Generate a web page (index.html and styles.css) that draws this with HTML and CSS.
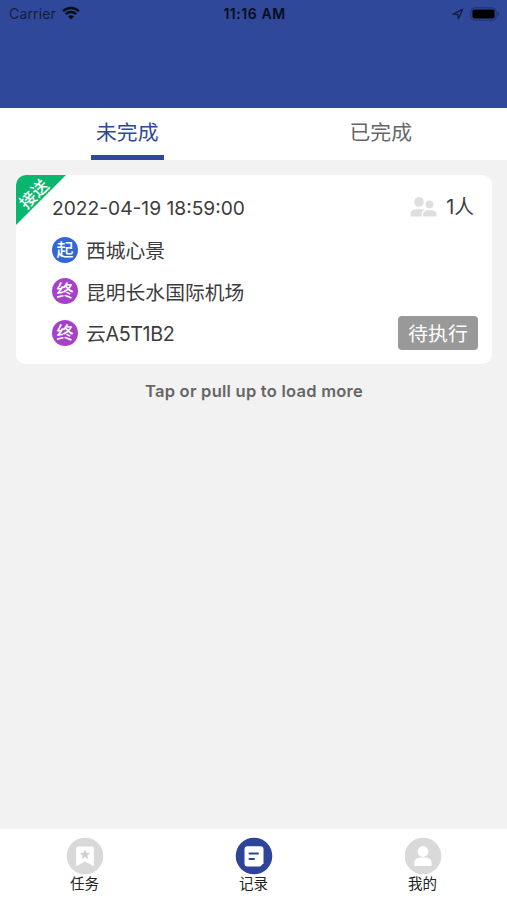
FILE: index.html
```html
<!DOCTYPE html>
<html lang="zh-CN">
<head>
    <meta charset="UTF-8">
    <meta name="viewport" content="width=device-width, initial-scale=1.0">
    <title>记录</title>
    <link rel="stylesheet" href="styles.css">
</head>
<body>
    <div class="app">
        <header class="header">
            <div class="status-bar">
                <div class="status-left">
                    <span class="carrier">Carrier</span>
                    <svg class="wifi" width="18" height="14" viewBox="0 0 18 14">
                        <path d="M1 5.2a11.5 11.5 0 0 1 16 0M3.8 8.2a7.4 7.4 0 0 1 10.4 0" fill="none" stroke="#080d1c" stroke-width="2.4"/>
                        <path d="M6 10.6a4.3 4.3 0 0 1 6 0L9 13.6z" fill="#080d1c"/>
                    </svg>
                </div>
                <div class="time">11:16 AM</div>
                <div class="status-right">
                    <svg width="12" height="12" viewBox="0 0 12 12">
                        <path d="M1 6.2 10.6 1.4 6.3 10.8 5.8 6.5z" fill="none" stroke="#141d40" stroke-width="1.3" stroke-linejoin="round"/>
                    </svg>
                    <svg width="30" height="14" viewBox="0 0 30 14">
                        <rect x=".8" y=".8" width="25.4" height="12.4" rx="3.8" fill="none" stroke="#21316a" stroke-width="1"/>
                        <rect x="2.4" y="2.4" width="22.2" height="9.2" rx="2" fill="#000"/>
                        <path d="M27.6 4.8v4.4q1.6-.7 1.6-2.2t-1.6-2.2z" fill="#21316a"/>
                    </svg>
                </div>
            </div>
        </header>

        <nav class="tabs">
            <div class="tab active">未完成</div>
            <div class="tab">已完成</div>
        </nav>

        <main class="content">
            <div class="card">
                <div class="ribbon"><span>接送</span></div>
                <div class="row">
                    <span class="date">2022-04-19 18:59:00</span>
                    <div class="people">
                        <svg width="27" height="20" viewBox="0 0 27 20" fill="#dedede">
                            <circle cx="9" cy="5" r="4.8"/>
                            <circle cx="19.5" cy="7.4" r="3.9"/>
                            <path d="M.5 19.5v-2.3q0-5 6-5H12q1.200 0 2.200.4-2.700 1.800-2.700 5v1.900z"/>
                            <path d="M13 19.500v-1.800q0-4.500 5-4.500h3.500q5 0 5 4.500v1.800z"/>
                        </svg>
                        <span>1人</span>
                    </div>
                </div>
                <div class="row">
                    <span class="dot start">起</span>
                    <span class="place">西城心景</span>
                </div>
                <div class="row">
                    <span class="dot end">终</span>
                    <span class="place">昆明长水国际机场</span>
                </div>
                <div class="row">
                    <span class="dot end">终</span>
                    <span class="place code">云A5T1B2</span>
                    <button class="state">待执行</button>
                </div>
            </div>
            <div class="load-more">Tap or pull up to load more</div>
        </main>

        <footer class="tabbar">
            <div class="item">
                <svg width="38" height="38" viewBox="0 0 38 38">
                    <circle cx="19" cy="19" r="18.3" fill="#d9d9d9"/>
                    <path d="M11.8 9.500h14.400q1.600 0 1.600 1.600v18.200L19 24.600l-8.800 4.700V11.100q0-1.600 1.600-1.600z" fill="#fff"/>
                    <path d="M19 12.200l1.400 3.600 3.900.2-3 2.400 1 3.800-3.300-2.100-3.300 2.100 1-3.800-3-2.400 3.900-.2z" fill="#d0d0d0"/>
                </svg>
                <span>任务</span>
            </div>
            <div class="item">
                <svg width="38" height="38" viewBox="0 0 38 38">
                    <circle cx="19" cy="19" r="18.3" fill="#2d4499"/>
                    <path d="M12.500 9.300h13q3 0 3 3v14l-3.200 3.200H12.500q-3 0-3-3V12.300q0-3 3-3z" fill="#fff"/>
                    <path d="M14.500 16.500h8.500M14.500 22h4.500" stroke="#2d4499" stroke-width="2" stroke-linecap="round"/>
                </svg>
                <span>记录</span>
            </div>
            <div class="item">
                <svg width="38" height="38" viewBox="0 0 38 38">
                    <circle cx="19" cy="19" r="18.3" fill="#d9d9d9"/>
                    <circle cx="19" cy="14.500" r="5.400" fill="#fff"/>
                    <path d="M10.300 29v-2.500q0-6 6-6h5.400q6 0 6 6V29z" fill="#fff"/>
                </svg>
                <span>我的</span>
            </div>
        </footer>
    </div>
</body>
</html>
```
FILE: styles.css
```css
* {
    box-sizing: border-box;
}
body {
    margin: 0;
    font-family: Inter, "Noto Sans CJK SC", sans-serif;
    background: #f2f2f2;
    color: #3c3c3c;
}
.app {
    display: flex;
    flex-direction: column;
    height: 900px;
}
.header {
    height: 108px;
    background: #304899;
}
.status-bar {
    display: grid;
    grid-template-columns: 1fr auto 1fr;
    align-items: center;
    height: 27px;
    padding: 0 7px 0 9px;
    color: #080d1c;
    font-size: 14px;
}
.status-left, .status-right {
    display: flex;
    align-items: center;
    gap: 6px;
}
.carrier {
    color: #141d40;
    letter-spacing: 0.15px;
}
.wifi {
    margin-top: -2px;
}
.status-right {
    justify-content: flex-end;
}
.time {
    font-weight: 600;
    letter-spacing: 0.55px;
}
.tabs {
    display: flex;
    height: 52px;
    background: #fff;
}
.tab {
    flex: 1;
    display: flex;
    flex-direction: column;
    align-items: center;
    justify-content: space-between;
    padding-left: 1px;
    line-height: 47px;
    padding-top: 1px;
    font-size: 20.8px;
    color: #666;
}
.tab.active {
    color: #304899;
}
.tab.active::after {
    content: "";
    width: 73px;
    height: 5px;
    margin-top: -1px;
    background: #304899;
}
.content {
    flex: 1;
    padding: 15px 15px 0 16px;
}
.card {
    position: relative;
    height: 189px;
    padding: 12px 14px 0 36px;
    background: #fff;
    border-radius: 10px;
    overflow: hidden;
}
.ribbon {
    position: absolute;
    top: 0;
    left: 0;
    width: 50px;
    height: 50px;
    background: #09b66d;
    clip-path: polygon(0 0, 100% 0, 0 100%);
}
.ribbon span {
    position: absolute;
    top: 8px;
    left: -7px;
    width: 50px;
    line-height: 22px;
    text-align: center;
    font-size: 16.5px;
    font-weight: 500;
    color: #fff;
    transform: rotate(-45deg);
}
.row {
    display: flex;
    align-items: center;
    height: 41.7px;
    font-size: 19.8px;
}
.date {
    font-size: 19.2px;
}
.people {
    display: flex;
    align-items: center;
    gap: 9px;
    margin-left: auto;
    margin-right: 4px;
    line-height: 26px;
    padding-bottom: 2px;
}
.code {
    letter-spacing: -0.4px;
}
.dot {
    width: 26px;
    height: 26px;
    margin-right: 8px;
    border-radius: 50%;
    line-height: 26px;
    text-align: center;
    font-size: 17px;
    font-weight: 500;
    color: #fff;
}
.start {
    background: #3268d6;
}
.end {
    background: #a642ca;
}
.state {
    width: 80px;
    height: 34px;
    margin-left: auto;
    padding: 0;
    border: 0;
    border-radius: 4px;
    background: #999;
    color: #fff;
    font: inherit;
}
.load-more {
    margin-top: 16px;
    line-height: 22px;
    text-align: center;
    font-size: 16.5px;
    font-weight: 600;
    letter-spacing: 0.25px;
    color: #666;
}
.tabbar {
    display: flex;
    height: 71px;
    padding-top: 8px;
    background: #fff;
}
.item {
    flex: 1;
    display: flex;
    flex-direction: column;
    align-items: center;
    line-height: 18px;
    font-size: 14.5px;
    color: #222;
}
```
